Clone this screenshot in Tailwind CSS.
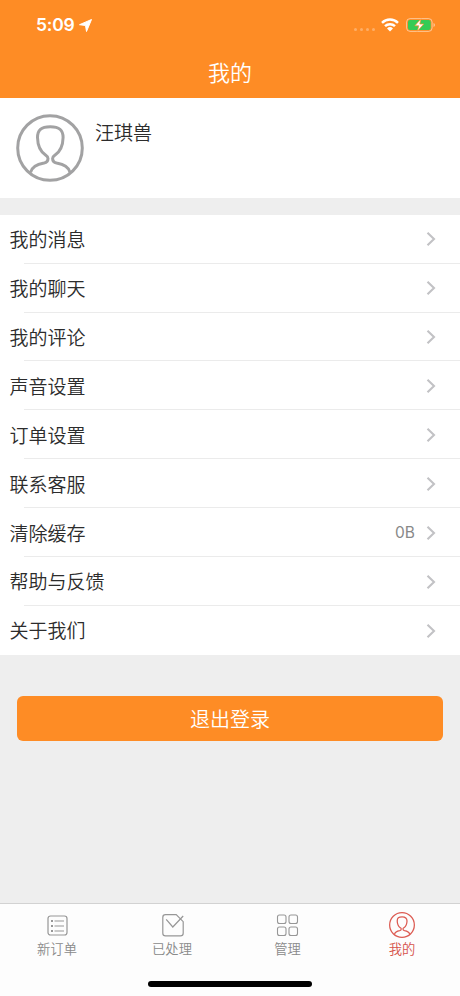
<!DOCTYPE html>
<html lang="zh-CN" class="h-full overflow-hidden">
<head>
<meta charset="utf-8">
<title>我的</title>
<script src="https://cdn.jsdelivr.net/npm/@tailwindcss/browser@4"></script>
</head>
<body class="h-full bg-[#eeeeee] font-['Noto_Sans_CJK_SC',sans-serif] font-[350] text-[#2c2c2c]">
<svg class="hidden">
  <symbol id="chevron" viewBox="0 0 10 16"><path d="M1.500 1.800 8 8l-6.500 6.200" fill="none" stroke="#c2c2c5" stroke-width="2.100"/></symbol>
  <symbol id="person" viewBox="0 0 68 68"><circle cx="34" cy="34" r="32.300"/><path d="M14.500 58.500C16 52 22 50 28 49c3-.6 4-2 4-4.500 0-2-1-2.500-2.500-3.500C25 38 21.700 32 21.500 23.500 21.500 16 25 12.700 34.300 12.700S47.100 16 47.100 23.500C46.900 32 43.600 38 39.100 41c-1.500 1-2.500 1.500-2.500 3.500 0 2.500 1 3.900 4 4.500 6 1 12 3 13.500 9.500"/></symbol>
</svg>
<div class="flex h-full w-full flex-col overflow-hidden">
  <header class="h-[98px] shrink-0 bg-[#fe8c25] text-white">
    <div class="flex h-[50px] items-center pl-9 pr-[24px]">
      <span class="font-['Inter',sans-serif] text-[17.500px] font-semibold leading-none tracking-[-0.2px]">5:09</span>
      <svg class="ml-[4px] h-[13px] w-[13px]" viewBox="0 0 13 13"><path d="M12.500.5 7.500 12.500 6.500 6.500.5 5.700Z" fill="#fff" stroke="#fff" stroke-width="1" stroke-linejoin="round"/></svg>
      <div class="ml-auto mt-[9px] flex gap-[2.500px]">
        <i class="size-[3.500px] rounded-full bg-white/30"></i><i class="size-[3.500px] rounded-full bg-white/30"></i><i class="size-[3.500px] rounded-full bg-white/30"></i><i class="size-[3.500px] rounded-full bg-white/30"></i>
      </div>
      <svg class="ml-[6px] h-[14px] w-[18px]" viewBox="0 0 18 14"><g fill="none" stroke="#fff" stroke-width="2.500"><path d="M1 4.800a11.500 11.500 0 0 1 16 0"/><path d="M4 8.200a7.200 7.200 0 0 1 10 0"/></g><path d="m9 13.500-3-3a4.300 4.300 0 0 1 6 0Z" fill="#fff"/></svg>
      <svg class="ml-[7px] h-[14px] w-[30px]" viewBox="0 0 30 14"><rect x=".6" y=".6" width="25.500" height="12.800" rx="3.500" fill="none" stroke="#fff" stroke-opacity=".5" stroke-width="1"/><rect x="2" y="2" width="22.700" height="10" rx="2" fill="#35cb55"/><path d="M27.500 5v4q1.500-.5 1.500-2t-1.500-2" fill="#fff" fill-opacity=".5"/><path d="M15 .8 8.800 7.800h4l-1.500 5.400 6.500-7.200h-4Z" fill="#fff" stroke="#fe8c25" stroke-width=".7"/></svg>
    </div>
    <h1 class="pt-[5px] text-center text-[22px] font-[350] leading-[33px]">我的</h1>
  </header>
  <section class="mb-[16.500px] flex h-[100px] shrink-0 bg-white pl-4 pt-[16px]">
    <svg class="size-[68px]" fill="none" stroke="#a2a2a3" stroke-width="3"><use href="#person"/></svg>
    <div class="ml-[11px] mt-[4px] text-[19px] leading-7">汪琪兽</div>
  </section>
  <main class="grid h-[440px] shrink-0 grid-rows-9 bg-white text-[19px]">
    <div class="relative flex items-center pl-[9.500px] pr-6 pt-px after:absolute after:-bottom-[0.3px] after:left-6 after:right-0 after:h-px after:bg-[#ebebeb]"><span>我的消息</span><svg class="ml-auto h-4 w-[10px]"><use href="#chevron"/></svg></div>
    <div class="relative flex items-center pl-[9.500px] pr-6 pt-px after:absolute after:-bottom-[0.3px] after:left-6 after:right-0 after:h-px after:bg-[#ebebeb]"><span>我的聊天</span><svg class="ml-auto h-4 w-[10px]"><use href="#chevron"/></svg></div>
    <div class="relative flex items-center pl-[9.500px] pr-6 pt-px after:absolute after:-bottom-[0.3px] after:left-6 after:right-0 after:h-px after:bg-[#ebebeb]"><span>我的评论</span><svg class="ml-auto h-4 w-[10px]"><use href="#chevron"/></svg></div>
    <div class="relative flex items-center pl-[9.500px] pr-6 pt-px after:absolute after:-bottom-[0.3px] after:left-6 after:right-0 after:h-px after:bg-[#ebebeb]"><span>声音设置</span><svg class="ml-auto h-4 w-[10px]"><use href="#chevron"/></svg></div>
    <div class="relative flex items-center pl-[9.500px] pr-6 pt-px after:absolute after:-bottom-[0.3px] after:left-6 after:right-0 after:h-px after:bg-[#ebebeb]"><span>订单设置</span><svg class="ml-auto h-4 w-[10px]"><use href="#chevron"/></svg></div>
    <div class="relative flex items-center pl-[9.500px] pr-6 pt-px after:absolute after:-bottom-[0.3px] after:left-6 after:right-0 after:h-px after:bg-[#ebebeb]"><span>联系客服</span><svg class="ml-auto h-4 w-[10px]"><use href="#chevron"/></svg></div>
    <div class="relative flex items-center pl-[9.500px] pr-6 pt-px after:absolute after:-bottom-[0.3px] after:left-6 after:right-0 after:h-px after:bg-[#ebebeb]"><span>清除缓存</span><span class="ml-auto mr-[11px] font-['Inter',sans-serif] text-[15.500px] font-normal text-[#888]">0B</span><svg class="h-4 w-[10px]"><use href="#chevron"/></svg></div>
    <div class="relative flex items-center pl-[9.500px] pr-6 pt-px after:absolute after:-bottom-[0.3px] after:left-6 after:right-0 after:h-px after:bg-[#ebebeb]"><span>帮助与反馈</span><svg class="ml-auto h-4 w-[10px]"><use href="#chevron"/></svg></div>
    <div class="flex items-center pl-[9.500px] pr-6 pt-px"><span>关于我们</span><svg class="ml-auto h-4 w-[10px]"><use href="#chevron"/></svg></div>
  </main>
  <button class="mx-[17px] mt-[41.500px] h-[45px] shrink-0 rounded-[6px] bg-[#fe8c25] text-[20px] text-white">退出登录</button>
  <footer class="mt-auto flex h-[93px] shrink-0 flex-col border-t border-[#d2d2d2] bg-[#fdfdfd]">
    <nav class="grid grid-cols-[114px_116px_115px_114px] text-center text-[13.300px] leading-5 text-[#8a8a8a]">
      <div class="flex flex-col items-center pt-[8px]">
        <svg class="size-[27px]" viewBox="0 0 27 27" fill="none" stroke="#979797" stroke-width="1.200"><rect x="4" y="4" width="19" height="19" rx="2.500"/><path d="M10.500 9H20M10.500 14H20M10.500 19H20"/><path d="M7 9h2M7 14h2M7 19h2" stroke-width="2"/></svg>
        <span>新订单</span>
      </div>
      <div class="flex flex-col items-center pt-[8px]">
        <svg class="size-[27px]" viewBox="0 0 27 27" fill="none" stroke="#979797" stroke-width="1.200"><path d="M17.200 2.700H6.500q-2.700 0-2.700 2.700v15.800q0 2.700 2.700 2.700h15q2.700 0 2.700-2.700V9.700Z"/><path d="m7.200 7.300 6.600 7.700L24.200 4"/></svg>
        <span>已处理</span>
      </div>
      <div class="flex flex-col items-center pt-[8px]">
        <svg class="size-[27px]" viewBox="0 0 27 27" fill="none" stroke="#979797" stroke-width="1.100"><rect x="3.500" y="3" width="8.500" height="8.500" rx="2"/><rect x="15" y="3" width="8.500" height="8.500" rx="2"/><rect x="3.500" y="15" width="8.500" height="8.500" rx="2"/><rect x="15" y="15" width="8.500" height="8.500" rx="2"/></svg>
        <span>管理</span>
      </div>
      <div class="flex flex-col items-center pt-[8px] text-[#d6534a]">
        <svg class="size-[26px] mb-px" fill="none" stroke="#dc5b52" stroke-width="3.300"><use href="#person"/></svg>
        <span>我的</span>
      </div>
    </nav>
    <div class="mx-auto mb-[9px] mt-auto h-[6px] w-[164px] rounded-full bg-black"></div>
  </footer>
</div>
</body>
</html>
